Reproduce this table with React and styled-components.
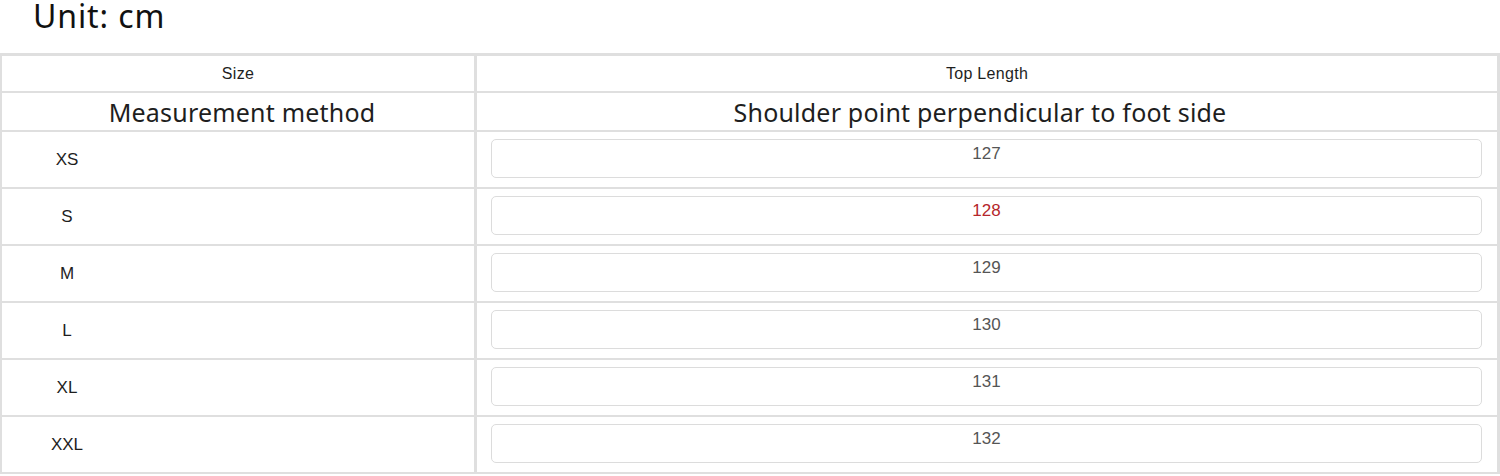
import React from "react";
import styled, { createGlobalStyle } from "styled-components";

const GlobalStyle = createGlobalStyle`
  body {
    margin: 0;
    background: #ffffff;
    font-family: "Liberation Sans", Arial, sans-serif;
  }
`;

const Page = styled.div`
  width: 1500px;
  height: 476px;
  overflow: hidden;
  background: #fff;
`;

const Title = styled.h2`
  margin: 0;
  height: 53px;
  padding: 0 0 0 33px;
  box-sizing: border-box;
  font-family: "Noto Sans", sans-serif;
  font-weight: 400;
  font-size: 32px;
  letter-spacing: 0.9px;
  line-height: 32px;
  color: #111;
`;

const Table = styled.div`
  display: grid;
  grid-template-columns: 472px 1fr;
  grid-auto-rows: 55px;
  grid-template-rows: 35px 37px;
  gap: 2px 3px;
  padding: 3px 3px 2px 2px;
  background: #dfdfdf;
`;

const Cell = styled.div`
  background: #fff;
  display: flex;
  align-items: center;
  justify-content: center;
  padding: ${(p) => p.$pad || "0"};
  color: #1e1e1e;
  font-size: ${(p) => (p.$big ? "25px" : "16px")};
  letter-spacing: ${(p) => (p.$big ? "0.2px" : "0.3px")};
  font-family: ${(p) =>
    p.$big ? '"Noto Sans", sans-serif' : '"Liberation Sans", Arial, sans-serif'};
`;

const SizeCell = styled.div`
  background: #fff;
  display: flex;
  align-items: center;
  font-size: 17px;
  color: #1e1e1e;
`;

const SizeLabel = styled.span`
  width: 130px;
  text-align: center;
`;

const ValueCell = styled.div`
  background: #fff;
  padding: 7px 15px 9px 14px;
  display: flex;
`;

const ValueBox = styled.div`
  flex: 1;
  border: 1px solid #dcdcdc;
  border-radius: 5px;
  text-align: center;
  padding-top: 4px;
  font-size: 17px;
  line-height: 20px;
  color: ${(p) => (p.$active ? "#b5262b" : "#555")};
`;

const rows = [
  { size: "XS", value: 127 },
  { size: "S", value: 128, active: true },
  { size: "M", value: 129 },
  { size: "L", value: 130 },
  { size: "XL", value: 131 },
  { size: "XXL", value: 132 },
];

export default function App() {
  return (
    <Page>
      <GlobalStyle />
      <Title>Unit: cm</Title>
      <Table>
        <Cell>Size</Cell>
        <Cell>Top Length</Cell>
        <Cell $big $pad="0 0 0 8px">Measurement method</Cell>
        <Cell $big $pad="0 14px 0 0">Shoulder point perpendicular to foot side</Cell>
        {rows.map((row) => (
          <React.Fragment key={row.size}>
            <SizeCell>
              <SizeLabel>{row.size}</SizeLabel>
            </SizeCell>
            <ValueCell>
              <ValueBox $active={row.active}>{row.value}</ValueBox>
            </ValueCell>
          </React.Fragment>
        ))}
      </Table>
    </Page>
  );
}
